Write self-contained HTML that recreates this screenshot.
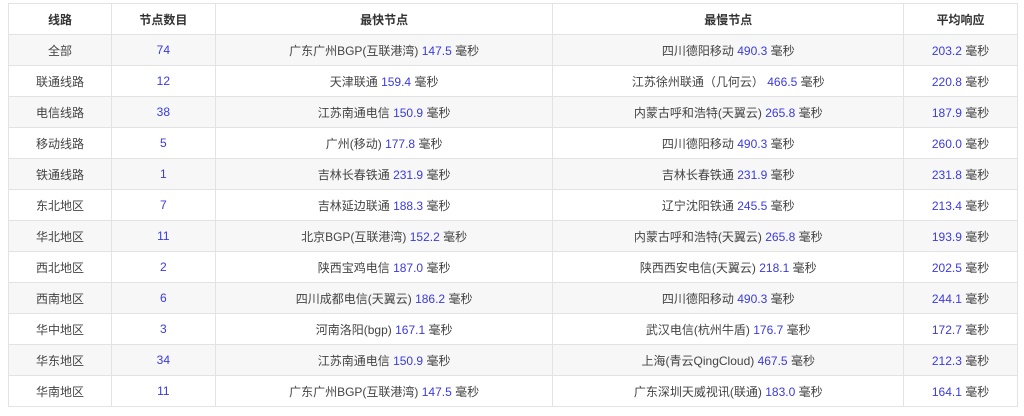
<!DOCTYPE html><html><head><meta charset="utf-8"><style>
body{margin:0;background:#fff;font-family:"Liberation Sans","Noto Sans CJK SC",sans-serif;}
table{position:absolute;left:8px;top:3px;width:1010px;border-collapse:collapse;font-size:12px;color:#444;}
td,th{border:1px solid #e3e3e3;text-align:center;height:30px;padding:0;}
th{font-weight:bold;color:#333;background:#fff;}
tr:nth-child(even) td{background:#f7f7f7;}
b{font-weight:normal;color:#3a3adf;}
</style></head><body><table>
<colgroup><col style="width:103px"><col style="width:104px"><col style="width:338px"><col style="width:351px"><col style="width:114px"></colgroup>
<tr><th>线路</th><th>节点数目</th><th>最快节点</th><th>最慢节点</th><th>平均响应</th></tr>
<tr><td>全部</td><td><b>74</b></td><td>广东广州BGP(互联港湾) <b>147.5</b> 毫秒</td><td>四川德阳移动 <b>490.3</b> 毫秒</td><td><b>203.2</b> 毫秒</td></tr>
<tr><td>联通线路</td><td><b>12</b></td><td>天津联通 <b>159.4</b> 毫秒</td><td>江苏徐州联通（几何云） <b>466.5</b> 毫秒</td><td><b>220.8</b> 毫秒</td></tr>
<tr><td>电信线路</td><td><b>38</b></td><td>江苏南通电信 <b>150.9</b> 毫秒</td><td>内蒙古呼和浩特(天翼云) <b>265.8</b> 毫秒</td><td><b>187.9</b> 毫秒</td></tr>
<tr><td>移动线路</td><td><b>5</b></td><td>广州(移动) <b>177.8</b> 毫秒</td><td>四川德阳移动 <b>490.3</b> 毫秒</td><td><b>260.0</b> 毫秒</td></tr>
<tr><td>铁通线路</td><td><b>1</b></td><td>吉林长春铁通 <b>231.9</b> 毫秒</td><td>吉林长春铁通 <b>231.9</b> 毫秒</td><td><b>231.8</b> 毫秒</td></tr>
<tr><td>东北地区</td><td><b>7</b></td><td>吉林延边联通 <b>188.3</b> 毫秒</td><td>辽宁沈阳铁通 <b>245.5</b> 毫秒</td><td><b>213.4</b> 毫秒</td></tr>
<tr><td>华北地区</td><td><b>11</b></td><td>北京BGP(互联港湾) <b>152.2</b> 毫秒</td><td>内蒙古呼和浩特(天翼云) <b>265.8</b> 毫秒</td><td><b>193.9</b> 毫秒</td></tr>
<tr><td>西北地区</td><td><b>2</b></td><td>陕西宝鸡电信 <b>187.0</b> 毫秒</td><td>陕西西安电信(天翼云) <b>218.1</b> 毫秒</td><td><b>202.5</b> 毫秒</td></tr>
<tr><td>西南地区</td><td><b>6</b></td><td>四川成都电信(天翼云) <b>186.2</b> 毫秒</td><td>四川德阳移动 <b>490.3</b> 毫秒</td><td><b>244.1</b> 毫秒</td></tr>
<tr><td>华中地区</td><td><b>3</b></td><td>河南洛阳(bgp) <b>167.1</b> 毫秒</td><td>武汉电信(杭州牛盾) <b>176.7</b> 毫秒</td><td><b>172.7</b> 毫秒</td></tr>
<tr><td>华东地区</td><td><b>34</b></td><td>江苏南通电信 <b>150.9</b> 毫秒</td><td>上海(青云QingCloud) <b>467.5</b> 毫秒</td><td><b>212.3</b> 毫秒</td></tr>
<tr><td>华南地区</td><td><b>11</b></td><td>广东广州BGP(互联港湾) <b>147.5</b> 毫秒</td><td>广东深圳天威视讯(联通) <b>183.0</b> 毫秒</td><td><b>164.1</b> 毫秒</td></tr>
</table></body></html>
